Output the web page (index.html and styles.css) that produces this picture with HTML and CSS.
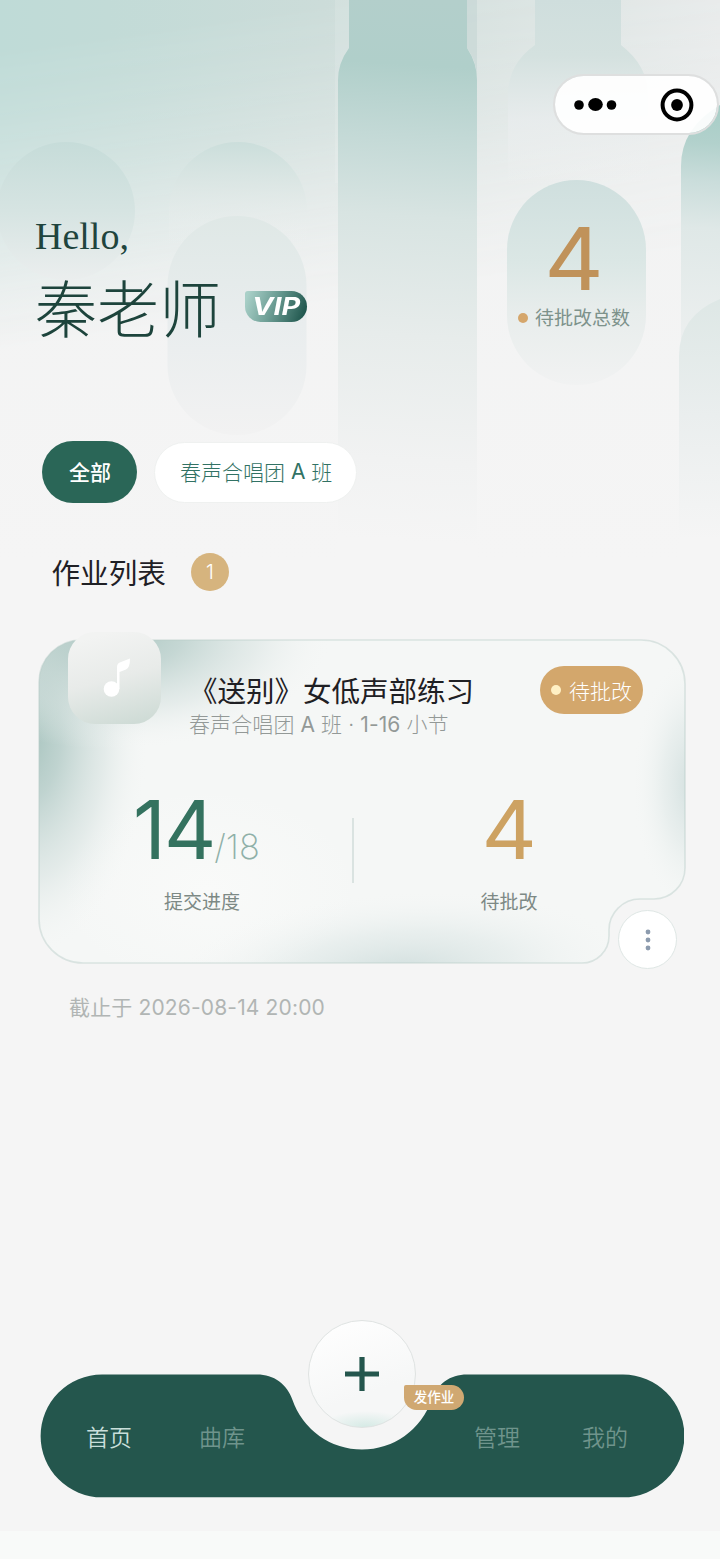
FILE: index.html
```html
<!DOCTYPE html>
<html lang="zh-CN">
<head>
<meta charset="utf-8">
<title>作业列表</title>
<link rel="stylesheet" href="styles.css">
</head>
<body>
<div class="page">
  <svg class="backdrop" viewBox="0 0 720 560" aria-hidden="true">
    <defs>
      <linearGradient id="tint" x1="0" x2="1" y1="0" y2="0">
        <stop offset="0" stop-color="#bfdbd7"/><stop offset=".15" stop-color="#c2dbd7"/><stop offset=".45" stop-color="#ccdcd9"/><stop offset=".7" stop-color="#d8e2e0"/><stop offset="1" stop-color="#e7eaea"/>
      </linearGradient>
      <linearGradient id="fade" gradientUnits="userSpaceOnUse" x1="0" y1="50" x2="42" y2="345">
        <stop offset="0" stop-color="#fff"/><stop offset=".2" stop-color="#dedede"/><stop offset=".42" stop-color="#a8a8a8"/><stop offset=".62" stop-color="#606060"/><stop offset=".82" stop-color="#222"/><stop offset="1" stop-color="#000"/>
      </linearGradient>
      <mask id="fadeMask"><rect width="720" height="560" fill="url(#fade)"/></mask>
      <linearGradient id="ground" x1="0" x2="0" y1="0" y2="1"><stop offset="0" stop-color="#f1f2f2"/><stop offset="1" stop-color="#f5f5f5"/></linearGradient>
      <linearGradient id="ball" x1="0" x2="0" y1="0" y2="1"><stop offset="0" stop-color="#c6dcd9"/><stop offset=".5" stop-color="#d6e4e2"/><stop offset="1" stop-color="#ebeeee"/></linearGradient>
      <linearGradient id="archA" gradientUnits="userSpaceOnUse" x1="0" y1="142" x2="0" y2="245"><stop offset="0" stop-color="#cbdedb"/><stop offset=".45" stop-color="#dde7e5" stop-opacity=".8"/><stop offset="1" stop-color="#f1f2f2" stop-opacity="0"/></linearGradient>
      <linearGradient id="archB" x1="0" x2="0" y1="0" y2="1"><stop offset="0" stop-color="#dfe8e6"/><stop offset=".5" stop-color="#e9edee"/><stop offset="1" stop-color="#f2f2f2"/></linearGradient>
      <linearGradient id="column" gradientUnits="userSpaceOnUse" x1="420" y1="0" x2="385" y2="540"><stop offset="0" stop-color="#b3cfcb"/><stop offset=".12" stop-color="#b0cfca"/><stop offset=".25" stop-color="#c3d9d6"/><stop offset=".4" stop-color="#d8e4e2"/><stop offset=".62" stop-color="#e7eceb"/><stop offset=".85" stop-color="#f1f2f2"/><stop offset="1" stop-color="#f5f5f5"/></linearGradient>
      <linearGradient id="columnB" gradientUnits="userSpaceOnUse" x1="0" y1="0" x2="0" y2="185"><stop offset="0" stop-color="#cfdedd"/><stop offset=".3" stop-color="#d4e1df"/><stop offset=".65" stop-color="#e8eced" stop-opacity=".8"/><stop offset="1" stop-color="#f1f2f2" stop-opacity="0"/></linearGradient>
      <linearGradient id="sideA" gradientUnits="userSpaceOnUse" x1="720" y1="105" x2="700" y2="380"><stop offset="0" stop-color="#a6cdc6"/><stop offset=".14" stop-color="#b2d1cc"/><stop offset=".28" stop-color="#cadddb"/><stop offset=".45" stop-color="#dfe8e7"/><stop offset="1" stop-color="#f1f2f2"/></linearGradient>
      <linearGradient id="sideB" gradientUnits="userSpaceOnUse" x1="0" y1="290" x2="0" y2="540"><stop offset="0" stop-color="#dde7e5"/><stop offset=".5" stop-color="#eaeeee"/><stop offset="1" stop-color="#f5f5f5"/></linearGradient>
    </defs>
    <rect width="720" height="560" fill="url(#ground)"/>
    <rect width="720" height="560" fill="url(#tint)" mask="url(#fadeMask)"/>
    <circle cx="66" cy="211" r="69" fill="url(#ball)"/>
    <path d="M169 250v-39a69 69 0 0 1 138 0v39z" fill="url(#archA)"/>
    <rect x="167.500" y="216" width="139" height="219" rx="69.500" fill="url(#archB)"/>
    <path d="M335 0h14v49q-11 14-11 34v100h-3z" fill="#fff" opacity=".12"/>
    <path d="M349 0H467V48Q477 63 477 80V560H338V80Q338 63 349 48Z" fill="url(#column)"/>
    <path d="M467 0h10v76q-1-16-10-28z" fill="#c4d5d3" opacity=".6"/>
    <path d="M535 0h86v45q27 21 27 50v90H508V95q0-31 27-50z" fill="url(#columnB)"/>
    <path d="M720 105Q681 128 681 166v394h39z" fill="url(#sideA)"/>
    <path d="M720 299q-41 17-41 57v204h41z" fill="url(#sideB)"/>
  </svg>

  <header class="topbar">
    <div class="capsule">
      <svg class="more" viewBox="0 0 44 20"><circle cx="5" cy="10" r="4.800"/><ellipse cx="21.500" cy="9.500" rx="7.300" ry="6.500"/><circle cx="37.500" cy="10" r="4.800"/></svg>
      <svg class="target" viewBox="0 0 34 34"><circle cx="17" cy="17" r="14.400"/><circle class="core" cx="17" cy="17" r="5.900"/></svg>
    </div>
  </header>

  <section class="hero">
    <div class="greeting">
      <p class="hello">Hello,</p>
      <div class="name-row">
        <h1 class="name">秦老师</h1>
        <span class="vip"><span class="vip-text">VIP</span></span>
      </div>
    </div>
    <div class="total">
      <strong class="total-num">4</strong>
      <span class="total-label"><i class="dot"></i>待批改总数</span>
    </div>
  </section>

  <nav class="tabs">
    <a class="tab active">全部</a>
    <a class="tab">春声合唱团&nbsp;<span class="latin">A</span>&nbsp;班</a>
  </nav>

  <div class="heading">
    <h2 class="heading-text">作业列表</h2>
    <span class="count">1</span>
  </div>

  <article class="card">
    <svg class="card-shape" viewBox="0 0 648 326" aria-hidden="true">
      <defs>
        <clipPath id="cardClip"><path id="cardPath" d="M43 1H603A44 44 0 0 1 647 45V229A31 31 0 0 1 616 260H602A31 31 0 0 0 571 291V297A27 27 0 0 1 544 324H45A44 44 0 0 1 1 280V43A42 42 0 0 1 43 1Z"/></clipPath>
        <radialGradient id="white"><stop offset="0" stop-color="#f9faf9"/><stop offset="1" stop-color="#f9faf9" stop-opacity="0"/></radialGradient>
        <radialGradient id="leftGlow"><stop offset="0" stop-color="#a3c1bb"/><stop offset=".3" stop-color="#b6cdc9" stop-opacity=".85"/><stop offset=".65" stop-color="#d5e1df" stop-opacity=".55"/><stop offset="1" stop-color="#f5f7f6" stop-opacity="0"/></radialGradient>
        <radialGradient id="rightGlow"><stop offset="0" stop-color="#d0dedd"/><stop offset=".5" stop-color="#e0e9e8" stop-opacity=".6"/><stop offset="1" stop-color="#f5f7f6" stop-opacity="0"/></radialGradient>
      </defs>
      <g clip-path="url(#cardClip)">
        <rect width="648" height="326" fill="#f5f7f6"/>
        <ellipse cx="170" cy="250" rx="150" ry="100" fill="url(#white)"/>
        <ellipse cx="-14" cy="95" rx="125" ry="225" fill="url(#leftGlow)"/>
        <ellipse cx="80" cy="-4" rx="215" ry="115" fill="url(#leftGlow)" opacity=".9"/>
        <ellipse cx="362" cy="334" rx="230" ry="82" fill="url(#rightGlow)" transform="rotate(-4 362 334)"/>
        <ellipse cx="656" cy="145" rx="62" ry="130" fill="url(#rightGlow)"/>
      </g>
      <use href="#cardPath" fill="none" stroke="#b7cbc7" stroke-opacity=".45" stroke-width="1.600"/>
    </svg>
    <div class="card-head">
      <div class="tile">
        <svg class="note" viewBox="0 0 28 40"><circle cx="8.500" cy="31" r="7.800"/><path d="M14 31V9q0-4 4-5l9-3.500q0 9.500-4 11l-6.500 2.500V31z"/></svg>
      </div>
      <div class="card-title">
        <h3 class="title">《送别》女低声部练习</h3>
        <p class="subtitle">春声合唱团 <span class="latin">A</span> 班 · <span class="latin">1-16</span> 小节</p>
      </div>
      <span class="status"><i class="status-dot"></i>待批改</span>
    </div>
    <div class="stats">
      <div class="stat progress">
        <p class="figure"><b class="figure-main">14</b><span class="figure-total">/18</span></p>
        <p class="stat-label">提交进度</p>
      </div>
      <i class="divider"></i>
      <div class="stat pending">
        <p class="figure"><b class="figure-main">4</b></p>
        <p class="stat-label">待批改</p>
      </div>
    </div>
    <button class="menu" aria-label="更多"><svg class="kebab" viewBox="0 0 6 22"><circle cx="3" cy="3" r="2.400"/><circle cx="3" cy="11" r="2.400"/><circle cx="3" cy="19" r="2.400"/></svg></button>
  </article>
  <p class="deadline">截止于 2026-08-14 20:00</p>

  <footer class="tabbar">
    <svg class="bar-shape" viewBox="0 0 644 124" aria-hidden="true"><path d="M62 .500H217C234 .500 247 10 252.500 26A73.500 73.500 0 0 0 391.500 26C397 10 410 .500 427 .500H583A61.200 61.200 0 0 1 583 123.300H62A61.200 61.200 0 0 1 62 .500Z"/></svg>
    <div class="group">
      <a class="item current">首页</a>
      <a class="item">曲库</a>
    </div>
    <div class="group right">
      <a class="item">管理</a>
      <a class="item">我的</a>
    </div>
    <div class="fab"><svg class="plus" viewBox="0 0 34 34"><path d="M17 0v34M0 17h34"/></svg></div>
    <span class="fab-tag">发作业</span>
  </footer>
  <div class="safe-area"></div>
</div>
</body>
</html>
```
FILE: styles.css
```css
* { box-sizing: border-box; }
body { margin: 0; background: #f5f5f5; font-family: Inter, "Noto Sans CJK SC", sans-serif; }
h1, h2, h3, p { margin: 0; font-weight: 400; }
i { font-style: normal; }

.page { position: relative; z-index: 0; width: 720px; height: 1559px; display: flex; flex-direction: column; overflow: hidden; }
.backdrop { position: absolute; z-index: -1; left: 0; top: 0; width: 720px; height: 560px; }
.latin { font-weight: 400; }

.topbar { height: 180px; padding: 74px 1px 0 0; display: flex; justify-content: flex-end; align-items: flex-start; }
.capsule { width: 166px; height: 61px; padding: 0 23px 0 19px; border: 2px solid #dedfdf; border-radius: 31px; background: rgba(255, 255, 255, .92); background-clip: padding-box; display: flex; align-items: center; justify-content: space-between; }
.more { width: 44px; height: 20px; }
.target { width: 34px; height: 34px; }
.target circle { fill: none; stroke: #000; stroke-width: 4; }
.target .core { fill: #000; stroke: none; }

.hero { height: 205px; padding: 0 74px 0 35px; display: flex; justify-content: space-between; }
.greeting { padding-top: 35px; }
.hello { font: 38px/42px "Liberation Serif", serif; color: #20443d; }
.name-row { margin-top: 13px; display: flex; align-items: center; gap: 24px; }
.name { font-family: "Noto Sans CJK SC", sans-serif; font-weight: 300; font-size: 62px; line-height: 72px; color: #1d443c; }
.vip { width: 62px; height: 31px; margin-top: 1px; border-radius: 3px 16px 16px 16px; background: linear-gradient(110deg, #a9d0c8 5%, #6d9e95 45%, #1d544b 95%); display: flex; align-items: center; justify-content: center; }
.vip-text { font: italic 700 24px/30px Inter, sans-serif; color: #fff; transform: scaleX(1.2); }
.total { width: 139px; border-radius: 70px; background: linear-gradient(#cfdfde, #dbe7e5 40%, #e8edec 65%, #f1f2f2); display: flex; flex-direction: column; align-items: center; }
.total-num { margin-top: 47px; margin-right: 4px; font-weight: 400; font-size: 87px; line-height: 64px; color: #c0925a; transform: scaleX(1.06); }
.total-label { display: flex; align-items: center; gap: 7px; margin: 14px 5px 0 0; font-size: 19px; line-height: 28px; color: #7d928b; white-space: nowrap; }
.dot { width: 10px; height: 10px; margin-top: -2px; border-radius: 50%; background: #d5a66b; }

.tabs { height: 62px; margin: 56px 0 0 42px; display: flex; align-items: center; gap: 17px; }
.tab { height: 61px; padding: 0 24px 2px 25px; border-radius: 31px; border: 1.500px solid #eff1f0; background: #fff; display: flex; align-items: center; font-weight: 300; font-size: 21px; color: #317264; white-space: nowrap; }
.tab.active { height: 62px; padding: 0 26px 2px 27px; border: 0; background: #2a6657; color: #fff; font-weight: 500; }

.heading { height: 40px; margin: 49px 0 0 51.500px; display: flex; align-items: center; gap: 25px; }
.heading-text { padding-top: 4px; font-size: 28.600px; line-height: 40px; color: #1f2025; }
.count { width: 38px; height: 38px; border-radius: 50%; background: #d6b47e; color: #fff; font-weight: 300; font-size: 20px; line-height: 39px; text-align: center; }

.card { position: relative; z-index: 0; width: 648px; height: 326px; margin: 47px 0 0 38px; }
.card-shape { position: absolute; z-index: -1; inset: 0; width: 648px; height: 326px; }
.card-head { height: 110px; padding: 0 43px 0 30px; display: flex; align-items: flex-start; }
.tile { width: 93px; height: 92px; margin-top: -7px; border-radius: 27px; background: linear-gradient(165deg, #f2f3f2 10%, #e8ebe9 50%, #cbd9d3); display: flex; align-items: center; justify-content: center; }
.note { width: 28px; height: 40px; margin-left: 5px; fill: #fff; }
.card-title { margin: 33px 0 0 28px; flex: 1; white-space: nowrap; }
.title { font-size: 28.500px; line-height: 40px; color: #1f2024; }
.subtitle { margin-top: -2px; font-weight: 300; font-size: 21px; line-height: 30px; letter-spacing: .1px; color: #939997; }
.status { width: 103px; height: 48px; padding-bottom: 1px; margin-top: 27px; border-radius: 24px; background: #d3a76c; display: flex; align-items: center; justify-content: center; gap: 8px; color: #fff; font-weight: 300; font-size: 21px; }
.status-dot { width: 10px; height: 10px; border-radius: 50%; background: #fff0c4; }
.stats { height: 216px; display: flex; }
.stat { display: flex; flex-direction: column; }
.progress { width: 314px; padding-left: 95px; }
.figure { height: 142px; padding-top: 41px; display: flex; align-items: baseline; white-space: nowrap; }
.figure-main { font-weight: 430; font-size: 81px; line-height: 80px; letter-spacing: -2px; color: #34725f; }
.figure-total { font-weight: 200; font-size: 34.500px; color: #8fb0a8; }
.stat-label { font-size: 19px; line-height: 24px; color: #7d8985; }
.progress .stat-label { padding-left: 31px; }
.divider { width: 2px; height: 65px; margin-top: 69px; background: #dae3e1; }
.pending { width: 310px; align-items: center; }
.pending .figure-main { font-weight: 400; color: #cda262; letter-spacing: 0; transform: scaleX(1.06); }
.menu { position: absolute; left: 580px; top: 271px; width: 59px; height: 59px; padding: 0; border: 1.500px solid #dfe7e5; border-radius: 50%; background: #fff; display: flex; align-items: center; justify-content: center; }
.kebab { width: 6px; height: 22px; fill: #8c9bae; }
.deadline { margin: 28px 0 0 69px; font-size: 21px; line-height: 30px; letter-spacing: .15px; color: #b1b5b4; white-space: nowrap; }

.tabbar { position: relative; z-index: 0; width: 644px; height: 124px; margin: auto 0 33px 40px; padding: 3px 56px 0 46px; display: flex; align-items: center; justify-content: space-between; }
.bar-shape { position: absolute; z-index: -1; left: 0; top: 0; width: 644px; height: 124px; fill: #24564d; }
.group { display: flex; gap: 67px; }
.group.right { gap: 62px; }
.item { font-weight: 350; font-size: 23px; line-height: 32px; color: #6f948c; }
.item.current { color: #c9dfda; }
.fab { position: absolute; left: 268px; top: -54px; width: 108px; height: 108px; border: 1.500px solid #dfe3e2; border-radius: 50%; background: radial-gradient(46px 16px at 54% 100%, #d5eae5, rgba(245, 248, 247, 0)), linear-gradient(160deg, #fff, #f6f7f7 65%); display: flex; align-items: center; justify-content: center; }
.plus { width: 34px; height: 34px; stroke: #24564d; stroke-width: 5.200; }
.fab-tag { position: absolute; left: 364px; top: 11px; width: 60px; height: 25px; border-radius: 2px 13px 13px 13px; background: #d0a872; color: #fff; font-weight: 500; font-size: 13.500px; line-height: 24px; text-align: center; }
.safe-area { height: 28px; flex: none; background: #f8faf9; }
```
